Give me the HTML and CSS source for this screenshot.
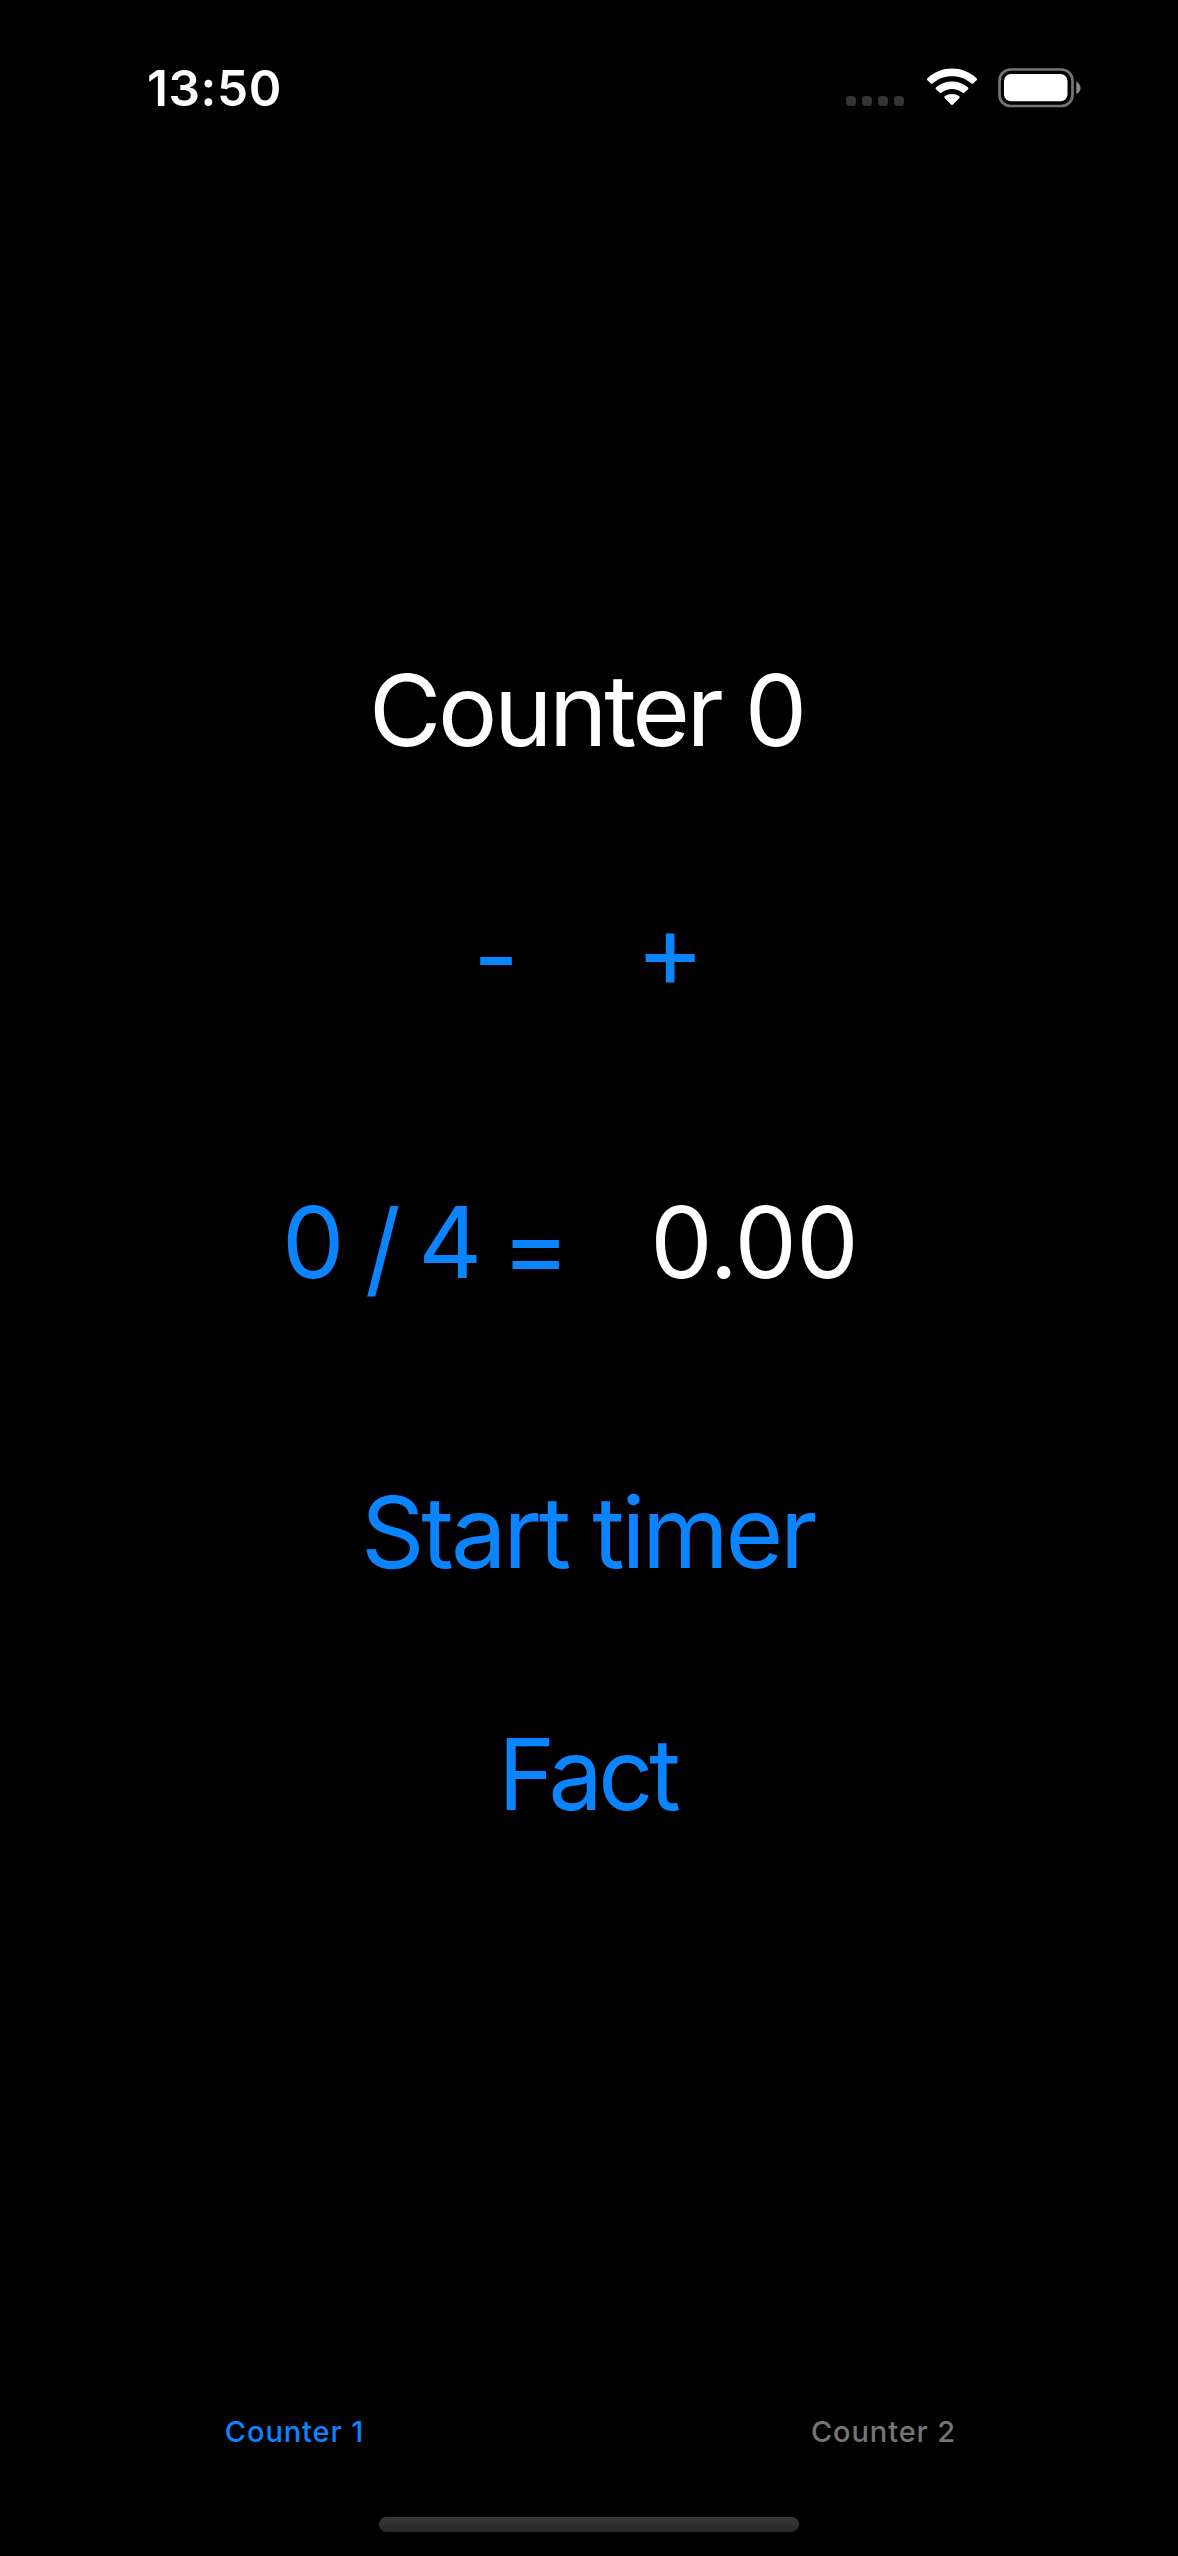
FILE: index.html
```html
<!DOCTYPE html>
<html lang="en">
<head>
<meta charset="utf-8">
<title>Counter</title>
<link rel="stylesheet" href="styles.css">
</head>
<body>
<div class="screen">
  <header class="status">
    <time class="clock">13:50</time>
    <div class="indicators">
      <svg class="cellular" width="60" height="12" viewBox="0 0 60 12" fill="#333"><rect x="1" y="1" width="10" height="10" rx="4"/><rect x="17" y="1" width="10" height="10" rx="4"/><rect x="33" y="1" width="10" height="10" rx="4"/><rect x="49" y="1" width="10" height="10" rx="4"/></svg>
      <svg class="wifi" width="52" height="38" viewBox="0 0 52 38" fill="#fff"><path d="M1.4 12.2Q.4 11.2 1.5 10.2C15.5-2.6 36.5-2.6 50.5 10.2Q51.6 11.2 50.6 12.2L47.1 15.6Q46.4 16.3 45.6 15.6C34.5 5.8 17.5 5.8 6.4 15.6Q5.6 16.3 4.9 15.6Z"/><path d="M10 21.2Q9 20.2 10.1 19.3C19.2 11.7 32.8 11.7 41.9 19.3Q43 20.2 42 21.2L38.3 24.8Q37.5 25.5 36.7 24.8C30.6 19.7 21.4 19.7 15.3 24.8Q14.5 25.5 13.7 24.8Z"/><path d="M18.6 30Q17.7 29.1 18.7 28.3C22.9 25.1 29.1 25.1 33.3 28.3Q34.3 29.1 33.4 30L26.7 36.7Q26 37.4 25.3 36.7Z"/></svg>
      <svg class="battery" width="84" height="40" viewBox="0 0 84 40"><rect x="1.5" y="1.5" width="73" height="36.5" rx="11" fill="none" stroke="#747474" stroke-width="2.7"/><rect x="6" y="6" width="63.5" height="27.3" rx="7" fill="#fff"/><path d="M78.2 13.5Q82.6 16 82.6 20T78.2 26Z" fill="#858585"/></svg>
    </div>
  </header>
  <main class="content">
    <div class="title">Counter 0</div>
    <div class="stepper"><button class="minus">-</button><button class="plus">+</button></div>
    <div class="division"><button class="expression"><span>0</span><span class="slash">/</span><span class="divisor">4</span><span class="equals">=</span></button><span class="result">0.00</span></div>
    <button class="timer">Start timer</button>
    <button class="fact">Fact</button>
  </main>
  <nav class="tabs">
    <button class="tab tab-active">Counter 1</button>
    <button class="tab">Counter 2</button>
  </nav>
  <div class="home-indicator"></div>
</div>
</body>
</html>
```
FILE: styles.css
```css
* { box-sizing: border-box; }
body { margin: 0; background: #000; }
button { border: 0; padding: 0; margin: 0; background: none; color: #0a84ff; font: inherit; letter-spacing: inherit; white-space: nowrap; }
.screen { width: 1178px; height: 2556px; display: flex; flex-direction: column; background: #000; color: #fff; font-family: Inter, "Liberation Sans", sans-serif; }
.status { height: 176px; padding: 58px 96px 0 147px; display: flex; justify-content: space-between; align-items: flex-start; }
.clock { font-size: 49.5px; font-weight: 600; line-height: 60px; letter-spacing: 0.6px; }
.indicators { display: flex; align-items: flex-start; padding-top: 10px; }
.cellular { margin: 27px 21px 0 0; }
.wifi { margin-right: 20px; }
.content { flex: 1; padding-top: 474px; display: flex; flex-direction: column; align-items: center; font-size: 99px; line-height: 120px; }
.title { letter-spacing: -3.4px; padding-right: 5px; }
.stepper { height: 120px; margin-top: 126px; display: flex; gap: 117px; }
.plus { font-size: 104px; transform: translateY(-6px); }
.division { margin-top: 166px; padding-right: 38px; display: flex; gap: 82px; }
.expression { display: flex; gap: 20.5px; }
.slash { transform: translateY(5px) scaleY(1.05); }
.divisor { margin-left: -3px; }
.equals { margin-left: 0; transform: translateY(5px) scaleX(1.06); }
.result { letter-spacing: -0.8px; }
.timer { margin-top: 170px; letter-spacing: -3.3px; padding-right: 3px; }
.fact { margin-top: 122px; letter-spacing: -4.5px; padding-right: 3px; transform: scaleX(0.975); }
.tabs { height: 110px; padding-top: 20px; display: grid; grid-template-columns: 1fr 1fr; align-items: start; font-size: 29px; font-weight: 500; line-height: 36px; margin-bottom: 13px; letter-spacing: 0.9px; }
.tab { color: #757575; }
.tab-active { color: #0a84ff; }
.home-indicator { width: 420px; height: 15px; margin: 0 auto 24px; border-radius: 8px; background: linear-gradient(#373737, #292929); }
```
